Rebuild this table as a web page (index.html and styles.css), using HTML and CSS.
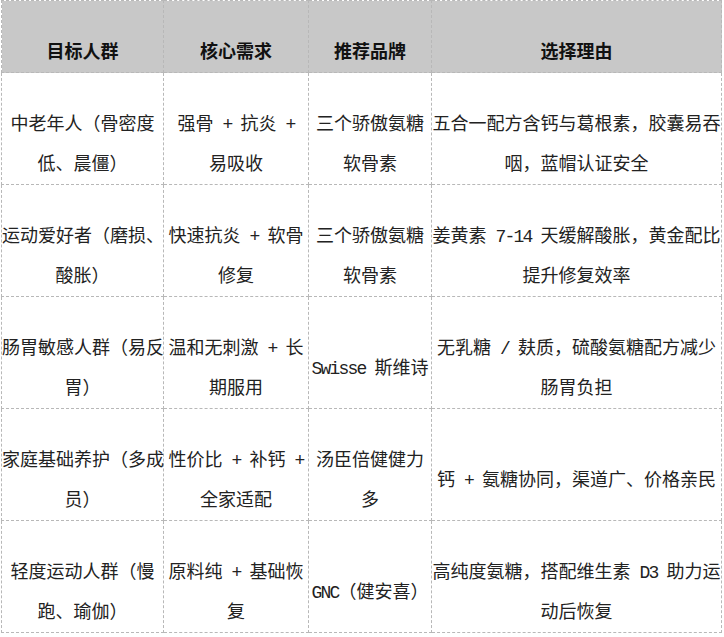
FILE: index.html
```html
<!DOCTYPE html>
<html lang="zh-CN">
<head>
<meta charset="utf-8">
<title>氨糖推荐表</title>
<link rel="stylesheet" href="styles.css">
</head>
<body>
<table class="grid">
  <colgroup>
    <col class="c1">
    <col class="c2">
    <col class="c3">
    <col class="c4">
  </colgroup>
  <thead>
    <tr>
      <th>目标人群</th>
      <th>核心需求</th>
      <th>推荐品牌</th>
      <th>选择理由</th>
    </tr>
  </thead>
  <tbody>
    <tr>
      <td>中老年人（骨密度<br>低、晨僵）</td>
      <td>强骨<span class="en"> + </span>抗炎<span class="en"> +</span><br>易吸收</td>
      <td>三个骄傲氨糖<br>软骨素</td>
      <td>五合一配方含钙与葛根素，胶囊易吞<br>咽，蓝帽认证安全</td>
    </tr>
    <tr>
      <td>运动爱好者（磨损、<br>酸胀）</td>
      <td>快速抗炎<span class="en"> + </span>软骨<br>修复</td>
      <td>三个骄傲氨糖<br>软骨素</td>
      <td>姜黄素<span class="en"> 7-14 </span>天缓解酸胀，黄金配比<br>提升修复效率</td>
    </tr>
    <tr>
      <td>肠胃敏感人群（易反<br>胃）</td>
      <td>温和无刺激<span class="en"> + </span>长<br>期服用</td>
      <td><span class="en">Swisse </span>斯维诗</td>
      <td>无乳糖<span class="en"> / </span>麸质，硫酸氨糖配方减少<br>肠胃负担</td>
    </tr>
    <tr>
      <td>家庭基础养护（多成<br>员）</td>
      <td>性价比<span class="en"> + </span>补钙<span class="en"> +</span><br>全家适配</td>
      <td>汤臣倍健健力<br>多</td>
      <td>钙<span class="en"> + </span>氨糖协同，渠道广、价格亲民</td>
    </tr>
    <tr>
      <td>轻度运动人群（慢<br>跑、瑜伽）</td>
      <td>原料纯<span class="en"> + </span>基础恢<br>复</td>
      <td><span class="en">GNC</span>（健安喜）</td>
      <td>高纯度氨糖，搭配维生素<span class="en"> D3 </span>助力运<br>动后恢复</td>
    </tr>
  </tbody>
</table>
</body>
</html>
```

FILE: styles.css
```css
html, body {
  margin: 0;
  padding: 0;
  background: #ffffff;
}

.grid {
  margin: 0 0 0 1px;
  width: 720px;
  table-layout: fixed;
  border-collapse: collapse;
  font-family: "Noto Sans CJK SC", "Noto Sans", sans-serif;
  font-size: 18px;
  color: #222222;
}

.c1 { width: 162px; }
.c2 { width: 145px; }
.c3 { width: 123px; }
.c4 { width: 290px; }

.grid th,
.grid td {
  border: 1px dashed #b8b8b8;
  padding: 29px 0 2px 0;
  line-height: 40px;
  text-align: center;
  vertical-align: middle;
  white-space: nowrap;
}

.grid th {
  background: #c8c8c8;
  color: #111111;
  font-weight: 700;
}

.en {
  font-family: "Liberation Mono", "DejaVu Sans Mono", monospace;
  font-size: 18px;
  letter-spacing: -1.8px;
  line-height: 1;
  white-space: pre;
}
```
